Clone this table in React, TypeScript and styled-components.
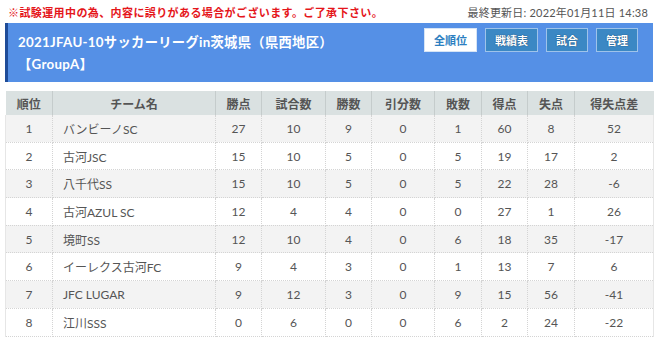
import styled, { createGlobalStyle } from "styled-components";

const GlobalStyle = createGlobalStyle`
  body {
    margin: 0;
    background: #fff;
    font-family: Lato, "Noto Sans CJK JP", sans-serif;
  }
`;

interface Team {
  name: string;
  pts: number;
  played: number;
  won: number;
  drawn: number;
  lost: number;
  gf: number;
  ga: number;
  gd: number;
}

const teams: Team[] = [
  { name: "バンビーノSC", pts: 27, played: 10, won: 9, drawn: 0, lost: 1, gf: 60, ga: 8, gd: 52 },
  { name: "古河JSC", pts: 15, played: 10, won: 5, drawn: 0, lost: 5, gf: 19, ga: 17, gd: 2 },
  { name: "八千代SS", pts: 15, played: 10, won: 5, drawn: 0, lost: 5, gf: 22, ga: 28, gd: -6 },
  { name: "古河AZUL SC", pts: 12, played: 4, won: 4, drawn: 0, lost: 0, gf: 27, ga: 1, gd: 26 },
  { name: "境町SS", pts: 12, played: 10, won: 4, drawn: 0, lost: 6, gf: 18, ga: 35, gd: -17 },
  { name: "イーレクス古河FC", pts: 9, played: 4, won: 3, drawn: 0, lost: 1, gf: 13, ga: 7, gd: 6 },
  { name: "JFC LUGAR", pts: 9, played: 12, won: 3, drawn: 0, lost: 9, gf: 15, ga: 56, gd: -41 },
  { name: "江川SSS", pts: 0, played: 6, won: 0, drawn: 0, lost: 6, gf: 2, ga: 24, gd: -22 },
];

const columns = [
  { label: "順位", width: 47 },
  { label: "チーム名", width: 163 },
  { label: "勝点", width: 46 },
  { label: "試合数", width: 64 },
  { label: "勝数", width: 46 },
  { label: "引分数", width: 63 },
  { label: "敗数", width: 47 },
  { label: "得点", width: 46 },
  { label: "失点", width: 47 },
  { label: "得失点差", width: 79 },
];

const buttons = ["全順位", "戦績表", "試合", "管理"];

export default function App() {
  return (
    <Page>
      <GlobalStyle />
      <NoticeBar>
        <Notice>※試験運用中の為、内容に誤りがある場合がございます。ご了承下さい。</Notice>
        <Updated>最終更新日: 2022年01月11日 14:38</Updated>
      </NoticeBar>
      <Header>
        <Titles>
          <Title>2021JFAU-10サッカーリーグin茨城県（県西地区）</Title>
          <Title>【GroupA】</Title>
        </Titles>
        <Nav>
          {buttons.map((b, i) => (
            <NavButton key={b} $active={i === 0}>
              {b}
            </NavButton>
          ))}
        </Nav>
      </Header>
      <Table>
        <colgroup>
          {columns.map((c) => (
            <col key={c.label} style={{ width: c.width }} />
          ))}
        </colgroup>
        <thead>
          <tr>
            {columns.map((c) => (
              <Th key={c.label}>{c.label}</Th>
            ))}
          </tr>
        </thead>
        <tbody>
          {teams.map((t, i) => (
            <Row key={t.name}>
              <Td>{i + 1}</Td>
              <Td $left>{t.name}</Td>
              <Td>{t.pts}</Td>
              <Td>{t.played}</Td>
              <Td>{t.won}</Td>
              <Td>{t.drawn}</Td>
              <Td>{t.lost}</Td>
              <Td>{t.gf}</Td>
              <Td>{t.ga}</Td>
              <Td>{t.gd}</Td>
            </Row>
          ))}
        </tbody>
      </Table>
    </Page>
  );
}

const Page = styled.div`
  padding: 3px 7px 0 5px;
`;

const NoticeBar = styled.div`
  display: flex;
  justify-content: space-between;
  align-items: center;
  height: 17px;
  padding: 0 5px 0 3px;
  margin-bottom: 3px;
  font-size: 11px;
`;

const Notice = styled.span`
  color: #e5161b;
  font-weight: 700;
  letter-spacing: 0.4px;
`;

const Updated = styled.span`
  color: #555;
  letter-spacing: 0.2px;
`;

const Header = styled.div`
  display: flex;
  justify-content: space-between;
  align-items: flex-start;
  height: 59px;
  background: #5590e6;
  border-left: 3px solid #1f4c98;
  box-sizing: border-box;
  padding: 5px 15px 0 10px;
  margin-bottom: 9px;
`;

const Titles = styled.div`
  display: flex;
  flex-direction: column;
  padding-top: 3px;
`;

const Title = styled.div`
  color: #fff;
  font-size: 13.3px;
  font-weight: 700;
  line-height: 22px;
  letter-spacing: 0.3px;
`;

const Nav = styled.div`
  display: flex;
  gap: 8px;
`;

const NavButton = styled.button<{ $active?: boolean }>`
  height: 24px;
  padding: 0 9px;
  font-family: inherit;
  font-size: 11px;
  font-weight: 700;
  border: 1px solid ${(p) => (p.$active ? "#d6e4f5" : "#9ec3ea")};
  background: ${(p) => (p.$active ? "#fff" : "#3b88c4")};
  color: ${(p) => (p.$active ? "#2c7fc1" : "#fff")};
  text-shadow: ${(p) => (p.$active ? "none" : "0 0 1px #1d4f7a, 0 0 1px #1d4f7a")};
  cursor: pointer;
`;

const Table = styled.table`
  width: 648px;
  table-layout: fixed;
  border-collapse: collapse;
  font-size: 12px;
  color: #555;
`;

const Th = styled.th`
  height: 24px;
  padding: 0;
  background: #dae1e1;
  font-weight: 700;
  color: #555;
  border-left: 1px solid #c5cccc;
  &:first-child {
    border-left: none;
  }
`;

const Row = styled.tr`
  &:nth-child(odd) {
    background: #f3f3f3;
  }
  &:nth-child(even) {
    background: #fff;
  }
`;

const Td = styled.td<{ $left?: boolean }>`
  height: 26.7px;
  padding: 0 ${(p) => (p.$left ? "10px" : "0")};
  text-align: ${(p) => (p.$left ? "left" : "center")};
  border: 1px dotted #d4d4d4;
  border-top: none;
  &:first-child {
    border-left: 1px solid #e6e6e6;
  }
  &:last-child {
    border-right: 1px solid #e6e6e6;
  }
`;
